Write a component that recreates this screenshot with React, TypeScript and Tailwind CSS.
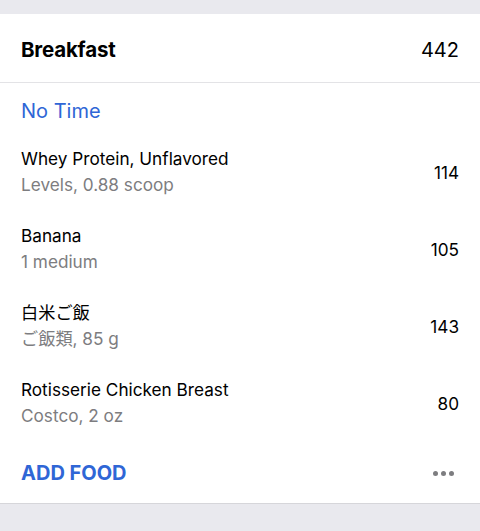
import React from 'react';

const FOODS = [
  { name: "Whey Protein, Unflavored", detail: "Levels, 0.88 scoop", cal: 114 },
  { name: "Banana", detail: "1 medium", cal: 105 },
  { name: "白米ご飯", detail: "ご飯類, 85 g", cal: 143 },
  { name: "Rotisserie Chicken Breast", detail: "Costco, 2 oz", cal: 80 },
];

export default function App() {
  return (
    <div
      className="w-[480px] h-[531px] bg-[#e9e9ee] pt-[14px] overflow-hidden text-black"
      style={{ fontFamily: 'Inter, "Noto Sans CJK JP", sans-serif' }}
    >
      <div className="bg-white border-b border-[#d6d6da]">
        {/* Header */}
        <div className="h-[69px] flex items-center justify-between px-[21px] pt-[4px] border-b border-[#e3e3e6]">
          <span className="text-[20.5px] font-bold tracking-[-0.2px]">Breakfast</span>
          <span className="text-[20px]">442</span>
        </div>

        {/* Time group */}
        <div className="h-[50px] flex items-center px-[21px] pt-[5px]">
          <span className="text-[20px] text-[#2f66d6]">No Time</span>
        </div>

        {/* Food rows */}
        {FOODS.map((f) => (
          <div key={f.name} className="h-[77px] flex items-center justify-between px-[21px]">
            <div className="flex flex-col">
              <span className="text-[17.2px] leading-[26px]">{f.name}</span>
              <span className="text-[17.2px] leading-[26px] text-[#7d7d80]">{f.detail}</span>
            </div>
            <span className="text-[17.2px] pt-[3px]">{f.cal}</span>
          </div>
        ))}

        {/* Footer */}
        <div className="h-[62px] flex items-center justify-between px-[21px] pt-[2px]">
          <span className="text-[20px] font-bold text-[#2f66d6]">ADD FOOD</span>
          <div className="flex gap-[3px] pr-[5px]">
            <span className="w-[5px] h-[5px] rounded-full bg-[#7d7d80]" />
            <span className="w-[5px] h-[5px] rounded-full bg-[#7d7d80]" />
            <span className="w-[5px] h-[5px] rounded-full bg-[#7d7d80]" />
          </div>
        </div>
      </div>
    </div>
  );
}
